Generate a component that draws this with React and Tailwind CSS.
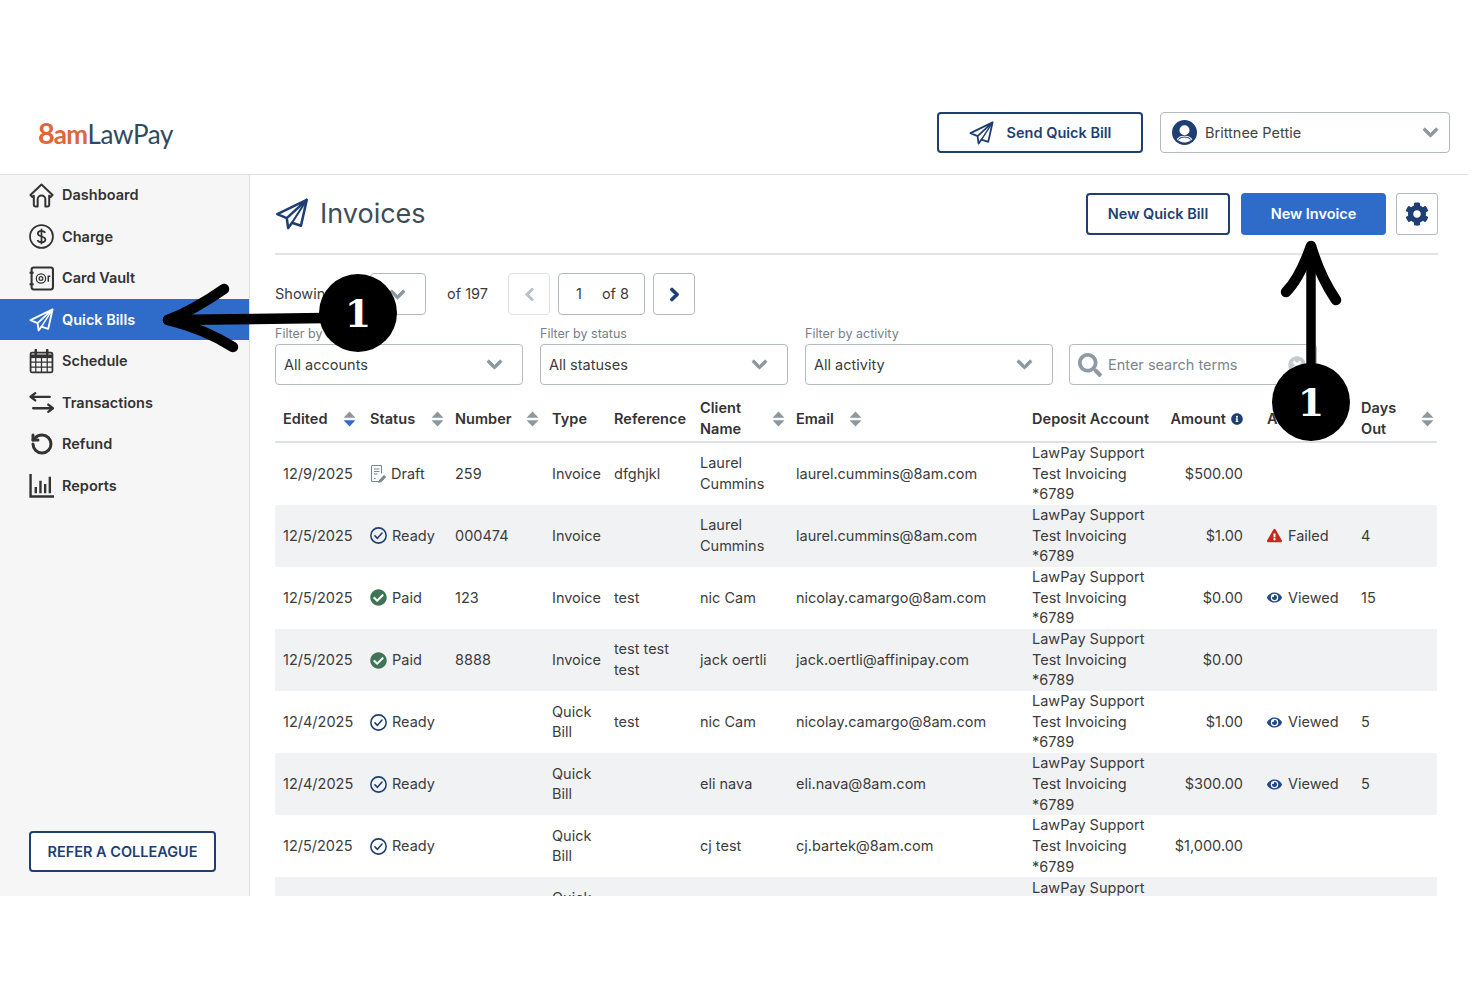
import React from 'react';
import { FaChevronDown, FaChevronLeft, FaChevronRight, FaCog, FaSearch, FaInfoCircle, FaCheckCircle, FaExclamationTriangle, FaEye, FaTimesCircle } from 'react-icons/fa';
import { LuRotateCcw } from 'react-icons/lu';

const navy = '#1f3f73';

const Plane = ({ className, sw = 1.900 }) => (
  <svg viewBox="0 0 26 25" fill="none" stroke="currentColor" strokeWidth={sw} strokeLinejoin="round" strokeLinecap="round" className={className}>
    <path d="M24.500 1.500 1.500 12.600l7.400 3.100L24.500 1.500 20 21.700l-7-2.400-3 4.200-1.100-7.800" />
    <path d="M13 19.300 24.500 1.500" strokeWidth={sw * 0.8} />
  </svg>
);
const Home = () => (
  <svg viewBox="0 0 26 26" fill="none" stroke="currentColor" strokeWidth="2.100" strokeLinecap="round" strokeLinejoin="round" className="w-[25px] h-[25px]">
    <path d="M1.500 12.500 13 1.500l11.500 11-2 2-1.500-1.300V23a1.500 1.500 0 0 1-1.500 1.500H17V17a4 4 0 0 0-8 0v7.500H6.500A1.500 1.500 0 0 1 5 23v-9.800l-1.500 1.300z" />
  </svg>
);
const Dollar = () => (
  <svg viewBox="0 0 24 24" fill="none" stroke="currentColor" strokeWidth="1.700" className="w-[25px] h-[25px]">
    <circle cx="12" cy="12" r="11" />
    <path d="M15.500 8.500c-.5-1.300-1.900-2-3.500-2-2 0-3.500 1-3.500 2.700 0 3.800 7.200 1.800 7.200 5.600 0 1.700-1.600 2.700-3.700 2.700-1.800 0-3.300-.8-3.800-2.200M12 4.500v15" />
  </svg>
);
const Vault = () => (
  <svg viewBox="0 0 24 24" fill="none" stroke="currentColor" strokeWidth="2" className="w-[25px] h-[25px]">
    <rect x="2.500" y="1.500" width="20.500" height="21" rx="2" />
    <circle cx="11.500" cy="12" r="4.500" strokeWidth="1.200" />
    <circle cx="11.500" cy="12" r="1.800" strokeWidth="1.200" />
    <path d="M.5 6.500h4M.5 17.500h4" />
    <path d="M18.500 9v6M18.500 9.800h2" strokeWidth="1.400" />
  </svg>
);
const Cal = () => (
  <svg viewBox="0 0 24 24" fill="none" stroke="currentColor" strokeWidth="1.200" className="w-[25px] h-[25px]">
    <rect x="1.500" y="3.500" width="21" height="19" rx="1.500" strokeWidth="1.700" />
    <path d="M1.500 7h21" strokeWidth="3.500" />
    <path d="M6.500 8v14M12 8v14M17.500 8v14M1.500 12.700h21M1.500 17.500h21" />
    <path d="M6.500 1v4M17.500 1v4" strokeWidth="2.400" strokeLinecap="round" />
  </svg>
);
const Trans = () => (
  <svg viewBox="0 0 24 24" fill="none" stroke="currentColor" strokeWidth="2.200" strokeLinecap="round" strokeLinejoin="round" className="w-[25px] h-[25px]">
    <path d="M20 6.500H2M6 3 1.500 6.500 6 10M4 17.500h19M18.500 14l4.500 3.500-4.500 3.500" />
  </svg>
);
const Bars = () => (
  <svg viewBox="0 0 24 24" fill="none" stroke="currentColor" strokeWidth="2.300" className="w-[25px] h-[25px]">
    <path d="M1.500 1v21.500H24" />
    <path d="M6.500 19.500v-6M11 19.500V7.500M15.500 19.500V10.500M20 19.500V3.500" />
  </svg>
);
const User = () => (
  <svg viewBox="0 0 24 24" className="w-[25px] h-[25px]">
    <circle cx="12" cy="12" r="12" fill={navy} />
    <circle cx="12" cy="9.800" r="4.800" fill="#fff" />
    <path d="M4.500 18.500c1.500-2.500 4-3.500 7.500-3.500s6 1 7.500 3.500C17.500 20.500 15 21.500 12 21.500s-5.500-1-7.500-3z" fill="#fff" />
    <path d="M6 18.700c1.500-1.700 3.500-2.400 6-2.400s4.500.7 6 2.400" stroke={navy} strokeWidth="1" fill="none" />
  </svg>
);
const Sort = ({ active }) => (
  <svg viewBox="0 0 12 16" className="w-[13px] h-[18px] shrink-0">
    <path d="M6 1 11.500 6.800H.5z" fill="#8d979f" />
    <path d="M6 15 11.500 9.200H.5z" fill={active ? '#2f6bc9' : '#8d979f'} />
  </svg>
);
const Draft = () => (
  <svg viewBox="0 0 16 18" fill="none" stroke="#7d868e" strokeWidth="1.100" className="w-[16px] h-[18px] shrink-0">
    <path d="M9 16.500H2.500a1 1 0 0 1-1-1v-14a1 1 0 0 1 1-1h8a1 1 0 0 1 1 1v7" />
    <path d="M4 4h5.500M4 6.500h5.500M4 9h3.500M4 13.500h1.500" />
    <path d="m9.500 15.500 4.500-4.800 1.500 1.300-4.500 4.700-2 .3z" fill="#7d868e" />
  </svg>
);
const Ready = () => (
  <svg viewBox="0 0 24 24" fill="none" stroke={navy} strokeWidth="2.200" strokeLinecap="round" strokeLinejoin="round" className="w-[17px] h-[17px] shrink-0">
    <circle cx="12" cy="12" r="10.800" />
    <path d="m7 12.500 3.500 3.500L17 8.500" />
  </svg>
);
const Down = ({ className = '' }) => <FaChevronDown stroke="currentColor" strokeWidth={30} className={`w-[17px] h-[17px] text-[#8f989f] ${className}`} />;

const nav = [
  ['Dashboard', <Home />],
  ['Charge', <Dollar />],
  ['Card Vault', <Vault />],
  ['Quick Bills', <Plane className="w-[25px] h-[24px]" />],
  ['Schedule', <Cal />],
  ['Transactions', <Trans />],
  ['Refund', <LuRotateCcw className="w-[24px] h-[24px]" strokeWidth={3} />],
  ['Reports', <Bars />],
];

const acct = ['LawPay Support', 'Test Invoicing', '*6789'];
const rows = [
  ['12/9/2025', 'Draft', '259', 'Invoice', 'dfghjkl', 'Laurel Cummins', 'laurel.cummins@8am.com', '$500.00', '', ''],
  ['12/5/2025', 'Ready', '000474', 'Invoice', '', 'Laurel Cummins', 'laurel.cummins@8am.com', '$1.00', 'Failed', '4'],
  ['12/5/2025', 'Paid', '123', 'Invoice', 'test', 'nic Cam', 'nicolay.camargo@8am.com', '$0.00', 'Viewed', '15'],
  ['12/5/2025', 'Paid', '8888', 'Invoice', 'test test test', 'jack oertli', 'jack.oertli@affinipay.com', '$0.00', '', ''],
  ['12/4/2025', 'Ready', '', 'Quick Bill', 'test', 'nic Cam', 'nicolay.camargo@8am.com', '$1.00', 'Viewed', '5'],
  ['12/4/2025', 'Ready', '', 'Quick Bill', '', 'eli nava', 'eli.nava@8am.com', '$300.00', 'Viewed', '5'],
  ['12/5/2025', 'Ready', '', 'Quick Bill', '', 'cj test', 'cj.bartek@8am.com', '$1,000.00', '', ''],
  ['12/5/2025', 'Ready', '', 'Quick Bill', '', 'cj test', 'cj.bartek@8am.com', '$1,000.00', '', ''],
];

const StatusIcon = ({ s }) => {
  if (s === 'Draft') return <Draft />;
  if (s === 'Ready') return <Ready />;
  return <FaCheckCircle className="w-[17px] h-[17px] shrink-0 text-[#3f7456]" />;
};
const Activity = ({ a }) => {
  if (!a) return null;
  return (
    <div className="flex items-center gap-[6px]">
      {a === 'Failed'
        ? <FaExclamationTriangle className="w-[15px] h-[15px] text-[#c42b1c]" />
        : <FaEye className="w-[15px] h-[15px] text-[#1f4a85]" />}
      <span>{a}</span>
    </div>
  );
};

const Select = ({ label, value, className }) => (
  <div className={className}>
    <div className="text-[12.500px] leading-[16px] text-[#77808a] h-[18px]">{label}</div>
    <div className="h-[41px] border border-[#b3bac1] rounded-[4px] flex items-center justify-between pl-[8px] pr-[19px] text-[#3c3c3c]">
      <span>{value}</span>
      <Down />
    </div>
  </div>
);

const Th = ({ children, sort, active, className = 'px-[8px]' }) => (
  <th className={`font-semibold text-left align-middle tracking-[0.05px] ${className}`}>
    <div className="flex items-center justify-between gap-1">
      <span>{children}</span>
      {sort && <Sort active={active} />}
    </div>
  </th>
);

const One = ({ className }) => (
  <div className={`absolute w-[78px] h-[78px] rounded-full bg-black flex items-center justify-center text-white font-bold text-[38px] ${className}`} style={{ fontFamily: '"DejaVu Serif", serif' }}>1</div>
);

export default function App() {
  return (
    <div className="relative h-[987px] w-[1480px] bg-white overflow-hidden pt-[92px] text-[14.500px] text-[#3c3c3c]" style={{ fontFamily: 'Inter, sans-serif' }}>
      <div className="w-[1468px]">
        <header className="h-[83px] border-b border-[#dfe0e2] flex items-center pl-[38px] pr-[18px]">
          <div className="flex items-baseline text-[26px] leading-none -mt-[2px]" style={{ fontFamily: 'Lato, sans-serif' }}>
            <span className="text-[#e0653a] font-bold text-[29px] tracking-[-1px]">8</span>
            <span className="text-[#e0653a] font-bold tracking-[-0.7px]">am</span>
            <span className="text-[#2f4a5e] tracking-[-0.3px]">LawPay</span>
          </div>
          <div className="ml-auto flex items-center gap-[17px] -mt-[1px]">
            <button className="w-[206px] h-[41px] border-2 border-[#1f3f73] rounded-[4px] flex items-center justify-center gap-[13px] font-semibold text-[#1f3f73]">
              <Plane className="w-[25px] h-[24px]" />
              <span>Send Quick Bill</span>
            </button>
            <div className="w-[290px] h-[41px] border border-[#b3bac1] rounded-[4px] flex items-center pl-[11px] pr-[10px]">
              <User />
              <span className="ml-[8px] text-[#444]">Brittnee Pettie</span>
              <Down className="ml-auto" />
            </div>
          </div>
        </header>
        <div className="flex h-[721px] overflow-hidden">
          <aside className="w-[250px] shrink-0 bg-[#f6f6f6] border-r border-[#dfe0e2] flex flex-col">
            <nav className="flex flex-col -mt-[1px]">
              {nav.map(([t, ic]) => {
                const on = t === 'Quick Bills';
                return (
                  <div key={t} className={`h-[41.500px] flex items-center pl-[29px] pt-[1px] font-semibold ${on ? 'bg-[#2f6bc9] text-white' : 'text-[#333]'}`}>
                    <span className="w-[25px] h-[27px] flex items-center justify-center shrink-0">{ic}</span>
                    <span className="ml-[8px]">{t}</span>
                  </div>
                );
              })}
            </nav>
            <button className="mt-auto mb-[24px] ml-[29px] w-[187px] h-[41px] border-2 border-[#1f3f73] rounded-[4px] bg-white text-[#1f3f73] font-semibold">REFER A COLLEAGUE</button>
          </aside>
          <main className="flex-1 pl-[25px] pr-[30px] min-w-0">
            <div className="h-[80px] border-b-2 border-[#e1e3e5] flex items-start pt-[18px]">
              <div className="flex items-center text-[#3d4d58] text-[27px] leading-[42px]">
                <Plane className="w-[34px] h-[32px] text-[#1f3f73] mr-[11px]" sw={2} />
                <span>Invoices</span>
              </div>
              <div className="ml-auto flex">
                <button className="w-[144px] h-[42px] border-2 border-[#1f3f73] rounded-[4px] font-semibold text-[#1f3f73]">New Quick Bill</button>
                <button className="ml-[11px] w-[145px] h-[42px] bg-[#2f6bc9] rounded-[4px] font-semibold text-white">New Invoice</button>
                <button className="ml-[10px] w-[42px] h-[42px] border border-[#b3bac1] rounded-[3px] flex items-center justify-center text-[#1f3f73]">
                  <FaCog className="w-[24px] h-[24px]" />
                </button>
              </div>
            </div>
            <div className="flex items-center h-[42px] mt-[18px]">
              <span className="w-[95px]">Showing</span>
              <div className="w-[56px] h-[42px] border border-[#b3bac1] rounded-[4px] flex items-center justify-end pr-[19px]">
                <Down />
              </div>
              <span className="ml-[21px] w-[61px]">of 197</span>
              <button className="w-[42px] h-[42px] border border-[#dfe2e5] rounded-[4px] flex items-center justify-center text-[#b9c0c6]">
                <FaChevronLeft stroke="currentColor" strokeWidth={30} className="w-[15px] h-[15px]" />
              </button>
              <div className="ml-[8px] w-[87px] h-[42px] border border-[#b3bac1] rounded-[4px] flex items-center pl-[17px]">
                <span>1</span><span className="ml-[20px]">of 8</span>
              </div>
              <button className="ml-[8px] w-[42px] h-[42px] border border-[#b3bac1] rounded-[4px] flex items-center justify-center text-[#1f3f73]">
                <FaChevronRight stroke="currentColor" strokeWidth={40} className="w-[15px] h-[15px]" />
              </button>
            </div>
            <div className="flex mt-[11px] items-end gap-[17px]">
              <Select className="w-[248px]" label="Filter by account" value="All accounts" />
              <Select className="w-[248px]" label="Filter by status" value="All statuses" />
              <Select className="w-[248px]" label="Filter by activity" value="All activity" />
              <div className="w-[248px] h-[41px] -ml-[1px] border border-[#b3bac1] rounded-[4px] flex items-center pl-[8px] pr-[10px] text-[#7c858d]">
                <FaSearch className="w-[24px] h-[24px] text-[#8f9aa3]" />
                <span className="ml-[6px]">Enter search terms</span>
                <FaTimesCircle className="ml-auto w-[18px] h-[18px] text-[#c5cace]" />
              </div>
            </div>
            <table className="table-fixed w-[1162px] mt-[12px] border-collapse">
              <colgroup>
                <col className="w-[87px]" /><col className="w-[85px]" /><col className="w-[97px]" /><col className="w-[62px]" />
                <col className="w-[86px]" /><col className="w-[96px]" /><col className="w-[236px]" /><col className="w-[138px]" />
                <col className="w-[97px]" /><col className="w-[94px]" /><col className="w-[84px]" />
              </colgroup>
              <thead>
                <tr className="h-[45px] border-b-2 border-[#dfe2e5] text-[#333] leading-[20.600px]">
                  <Th sort active className="pl-[8px] pr-[6px]">Edited</Th>
                  <Th sort className="pl-[8px] pr-[3px]">Status</Th>
                  <Th sort className="pl-[8px] pr-[5px]">Number</Th>
                  <Th>Type</Th>
                  <Th>Reference</Th>
                  <Th sort className="pl-[8px] pr-[3px]">Client Name</Th>
                  <th className="font-semibold text-left px-[8px]"><div className="flex items-center gap-[15px]"><span>Email</span><Sort /></div></th>
                  <Th>Deposit Account</Th>
                  <th className="font-semibold text-right pl-[6px] pr-[16px] whitespace-nowrap tracking-[0.05px]"><span className="inline-flex items-center gap-[5px]">Amount <FaInfoCircle className="w-[12px] h-[12px] text-[#1f3f73]" /></span></th>
                  <Th sort>Activity</Th>
                  <Th sort className="pl-[8px] pr-[3px]">Days Out</Th>
                </tr>
              </thead>
              <tbody className="leading-[20.600px]">
                {rows.map((r, i) => (
                  <tr key={i} className={`h-[62.100px] ${i % 2 ? 'bg-[#f1f2f4]' : ''}`}>
                    <td className="px-[8px]">{r[0]}</td>
                    <td className="px-[8px]"><div className="flex items-center gap-[5px]"><StatusIcon s={r[1]} /><span>{r[1]}</span></div></td>
                    <td className="px-[8px]">{r[2]}</td>
                    <td className="px-[8px]">{r[3]}</td>
                    <td className="px-[8px]">{r[4]}</td>
                    <td className="px-[8px]">{r[5]}</td>
                    <td className="px-[8px]">{r[6]}</td>
                    <td className="px-[8px]">{acct.map(l => <div key={l}>{l}</div>)}</td>
                    <td className="pl-[8px] pr-[16px] text-right">{r[7]}</td>
                    <td className="px-[8px]"><Activity a={r[8]} /></td>
                    <td className="px-[8px]">{r[9]}</td>
                  </tr>
                ))}
              </tbody>
            </table>
          </main>
        </div>
      </div>

      <svg className="absolute inset-0 w-[1480px] h-[987px] pointer-events-none" viewBox="0 0 1480 987" fill="none" stroke="#000" strokeWidth="10.500" strokeLinecap="round" strokeLinejoin="round">
        <path d="M325 318 168 320" />
        <path d="M224 289c-20 14-38 24-56 31 24 6 46 15 65 27" />
        <path d="M1311 375V247" strokeWidth="9.500" />
        <path d="M1286 292c10-10 18-26 25-46 6 20 14 38 25 54" />
      </svg>
      <One className="left-[319px] top-[274px]" />
      <One className="left-[1272px] top-[363px]" />
    </div>
  );
}
